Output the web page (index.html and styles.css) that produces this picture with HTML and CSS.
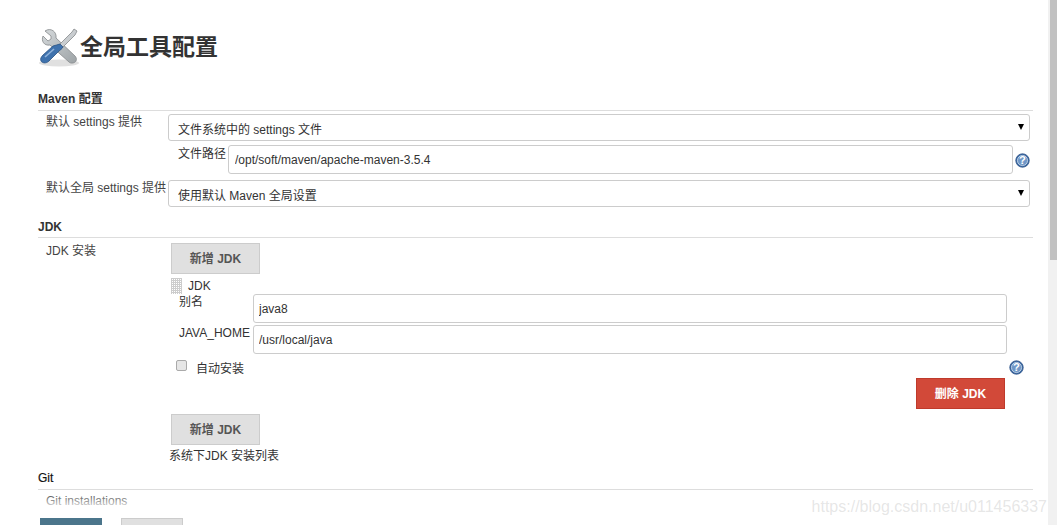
FILE: index.html
```html
<!DOCTYPE html>
<html lang="zh-CN">
<head>
  <meta charset="UTF-8">
  <meta name="viewport" content="width=device-width, initial-scale=1.0">
  <title>全局工具配置</title>
  <link rel="stylesheet" href="styles.css">
</head>
<body>
  <div class="page">
    <h1 class="page-title">
      <svg class="title-icon" width="42" height="42" viewBox="0 0 42 42">
        <defs>
          <linearGradient id="steel" x1="0" y1="0" x2="1" y2="1">
            <stop offset="0" stop-color="#d6dadc"/>
            <stop offset="1" stop-color="#9da3a6"/>
          </linearGradient>
        </defs>
        <ellipse cx="21" cy="37" rx="20" ry="3.5" fill="#000" opacity="0.12"/>
        <path d="M7 5 L13 10 L13 13 L10 15 L5 10 C3 15 6 20 12 19 L31 36 C33 38 37 37 38 35 C39 33 38 31 37 30 L18 12 C19 6 13 1 7 5 Z" fill="url(#steel)" stroke="#85898c" stroke-width="0.8"/>
        <path d="M36 3 L39 5 L37 9 L24 22 L21 19 L34 6 Z" fill="#c9cdd0" stroke="#85898c" stroke-width="0.8"/>
        <path d="M22 18 L25 21 C24 23 22 24 21 25 L11 35 C8 38 4 37 3 35 C2 33 3 31 5 29 L15 20 C17 19 20 19 22 18 Z" fill="#3f72ad" stroke="#2a5384" stroke-width="0.8"/>
        <path d="M7 31 L16 23" stroke="#8fb2da" stroke-width="1.6" fill="none"/>
      </svg>
      全局工具配置
    </h1>

    <section class="section">
      <h3 class="section-head section-head-maven">Maven 配置</h3>
      <div class="row">
        <label class="row-label">默认 settings 提供</label>
        <div class="select-wrap">
          <select class="select"><option>文件系统中的 settings 文件</option></select>
        </div>
      </div>
      <div class="sub-row">
        <label class="sub-label">文件路径</label>
        <input class="text-input" type="text" value="/opt/soft/maven/apache-maven-3.5.4">
        <svg class="help" width="15" height="15" viewBox="0 0 16 16">
          <circle cx="8" cy="8" r="7.2" fill="#3d6aa3" stroke="#2c5187" stroke-width="0.8"/>
          <circle cx="8" cy="8" r="5.4" fill="#6f97c7" stroke="#dbe6f2" stroke-width="0.8"/>
          <text x="8" y="12" text-anchor="middle" class="help-mark">?</text>
        </svg>
      </div>
      <div class="row row-global">
        <label class="row-label">默认全局 settings 提供</label>
        <div class="select-wrap">
          <select class="select"><option>使用默认 Maven 全局设置</option></select>
        </div>
      </div>
    </section>

    <section class="section section-jdk">
      <h3 class="section-head">JDK</h3>
      <div class="jdk-grid">
        <label class="row-label">JDK 安装</label>
        <div class="jdk-body">
          <button class="btn">新增 JDK</button>
          <div class="jdk-card">
            <div class="jdk-title"><span class="handle"></span>JDK</div>
            <div class="field">
              <label>别名</label>
              <input class="text-input" type="text" value="java8">
            </div>
            <div class="field">
              <label>JAVA_HOME</label>
              <input class="text-input" type="text" value="/usr/local/java">
            </div>
            <div class="auto-row">
              <label class="check-label"><input type="checkbox" class="check">自动安装</label>
              <svg class="help" width="15" height="15" viewBox="0 0 16 16">
                <circle cx="8" cy="8" r="7.2" fill="#3d6aa3" stroke="#2c5187" stroke-width="0.8"/>
                <circle cx="8" cy="8" r="5.4" fill="#6f97c7" stroke="#dbe6f2" stroke-width="0.8"/>
                <text x="8" y="12" text-anchor="middle" class="help-mark">?</text>
              </svg>
            </div>
            <div class="delete-row"><button class="btn btn-danger">删除 JDK</button></div>
          </div>
          <button class="btn btn-add">新增 JDK</button>
          <div class="jdk-note">系统下JDK 安装列表</div>
        </div>
      </div>
    </section>

    <section class="section section-git">
      <h3 class="section-head section-head-git">Git</h3>
      <div class="row-label git-label">Git installations</div>
    </section>
  </div>

  <div class="bottom-bar">
    <button class="btn-save"></button>
    <button class="btn-apply"></button>
  </div>
  <div class="watermark">https://blog.csdn.net/u011456337</div>
  <div class="scrollbar"><div class="scroll-thumb"></div></div>
</body>
</html>
```

FILE: styles.css
```css
* {
  box-sizing: border-box;
}

html, body {
  margin: 0;
  height: 100%;
  overflow: hidden;
}

body {
  position: relative;
  background: #fff;
  color: #333;
  font-family: "Liberation Sans", Arial, "Noto Sans CJK SC", sans-serif;
  font-size: 12px;
  line-height: 16px;
}

.page {
  width: 1033px;
  padding: 26px 0 0 38px;
}

.page-title {
  display: flex;
  align-items: center;
  height: 42px;
  margin: 0 0 22px;
  font-size: 23px;
  font-weight: bold;
  line-height: 42px;
}

.title-icon {
  flex: none;
}

.section-head {
  margin: 0;
  height: 21px;
  padding-top: 2px;
  border-bottom: 1px solid #ddd;
  font-size: 12px;
  font-weight: bold;
  line-height: 16px;
}

.section-head-maven {
  padding-top: 1px;
}

.row {
  display: grid;
  grid-template-columns: 122px 862px;
  padding: 3px 0 0 8px;
}

.row-label {
  display: block;
  color: #444;
}

.select-wrap {
  position: relative;
}

.select-wrap::after {
  content: "";
  position: absolute;
  right: 6px;
  top: 10px;
  border-left: 3px solid transparent;
  border-right: 3px solid transparent;
  border-top: 6px solid #000;
}

.select {
  display: block;
  width: 100%;
  height: 27px;
  padding: 5px 9px 0;
  border: 1px solid #ccc;
  border-radius: 3px;
  background: #fff;
  color: #333;
  font: inherit;
  appearance: none;
}

.text-input {
  display: block;
  height: 29px;
  padding: 0 6px;
  border: 1px solid #ccc;
  border-radius: 3px;
  background: #fff;
  color: #333;
  font: inherit;
}

.sub-row {
  display: flex;
  align-items: flex-start;
  padding: 4px 0 0 140px;
}

.sub-label {
  width: 50px;
  padding-top: 1px;
}

.sub-row .text-input {
  width: 785px;
}

.sub-row .help {
  margin: 8px 0 0 2px;
}

.help-mark {
  fill: #fff;
  font-size: 12px;
  font-weight: bold;
}

.row-global {
  padding-top: 6px;
}

.section-jdk {
  margin-top: 10px;
}

.jdk-grid {
  display: grid;
  grid-template-columns: 125px 1fr;
  padding: 5px 0 0 8px;
}

.jdk-body {
  min-width: 0;
}

.btn {
  display: block;
  width: 89px;
  height: 31px;
  padding: 0;
  border: 1px solid #ccc;
  background: #e0e0e0;
  color: #555;
  font: inherit;
  font-weight: bold;
}

.jdk-card {
  width: 836px;
  padding-top: 3px;
}

.jdk-title {
  display: flex;
  align-items: center;
  height: 17px;
  color: #333;
}

.handle {
  width: 11px;
  height: 16px;
  margin-right: 6px;
  background-image: linear-gradient(#ccc 1px, transparent 1px), linear-gradient(90deg, #ccc 1px, transparent 1px);
  background-size: 2px 2px;
}

.field {
  display: grid;
  grid-template-columns: 74px 754px;
  margin-left: 8px;
  margin-bottom: 2px;
}

.field .text-input {
  padding: 0 5px;
}

.auto-row {
  display: flex;
  justify-content: space-between;
  align-items: flex-start;
  padding: 4px 0 0 5px;
  width: 853px;
}

.check-label {
  display: flex;
  align-items: center;
}

.check {
  width: 11px;
  height: 11px;
  margin: 0 9px 6px 0;
  border: 1px solid #aaa;
  border-radius: 2px;
  background: #e6e6e6;
  appearance: none;
}

.delete-row {
  display: flex;
  justify-content: flex-end;
  width: 834px;
  margin-top: 1px;
}

.btn-danger {
  border-color: #bf3a2b;
  background: #d24939;
  color: #fff;
}

.btn-add {
  margin-top: 5px;
}

.jdk-note {
  margin: 3px 0 0 -2px;
}

.section-git {
  margin-top: 4px;
}

.section-head-git {
  height: 22px;
  font-weight: normal;
  color: #111;
  -webkit-text-stroke: 0.2px #111;
}

.git-label {
  padding: 3px 0 0 8px;
}

.bottom-bar {
  position: absolute;
  left: 0;
  right: 8px;
  bottom: 0;
  height: 32px;
  padding: 25px 0 0 40px;
  display: flex;
  gap: 19px;
  background: linear-gradient(rgba(255, 255, 255, 0), rgba(255, 255, 255, 0.75) 40%, #fff 75%);
  overflow: hidden;
}

.btn-save,
.btn-apply {
  flex: none;
  width: 62px;
  height: 30px;
  padding: 0;
  border: 1px solid #4b758b;
  background: #4b758b;
}

.btn-apply {
  border-color: #ccc;
  background: #e0e0e0;
}

.watermark {
  position: absolute;
  right: 10px;
  top: 497px;
  color: rgba(170, 170, 170, 0.3);
  font-size: 16px;
  line-height: 20px;
}

.scrollbar {
  position: absolute;
  top: 0;
  right: 0;
  bottom: 0;
  width: 9px;
  background: #f1f1f1;
}

.scroll-thumb {
  width: 7px;
  height: 260px;
  margin-left: 2px;
  background: #c1c1c1;
}
```
